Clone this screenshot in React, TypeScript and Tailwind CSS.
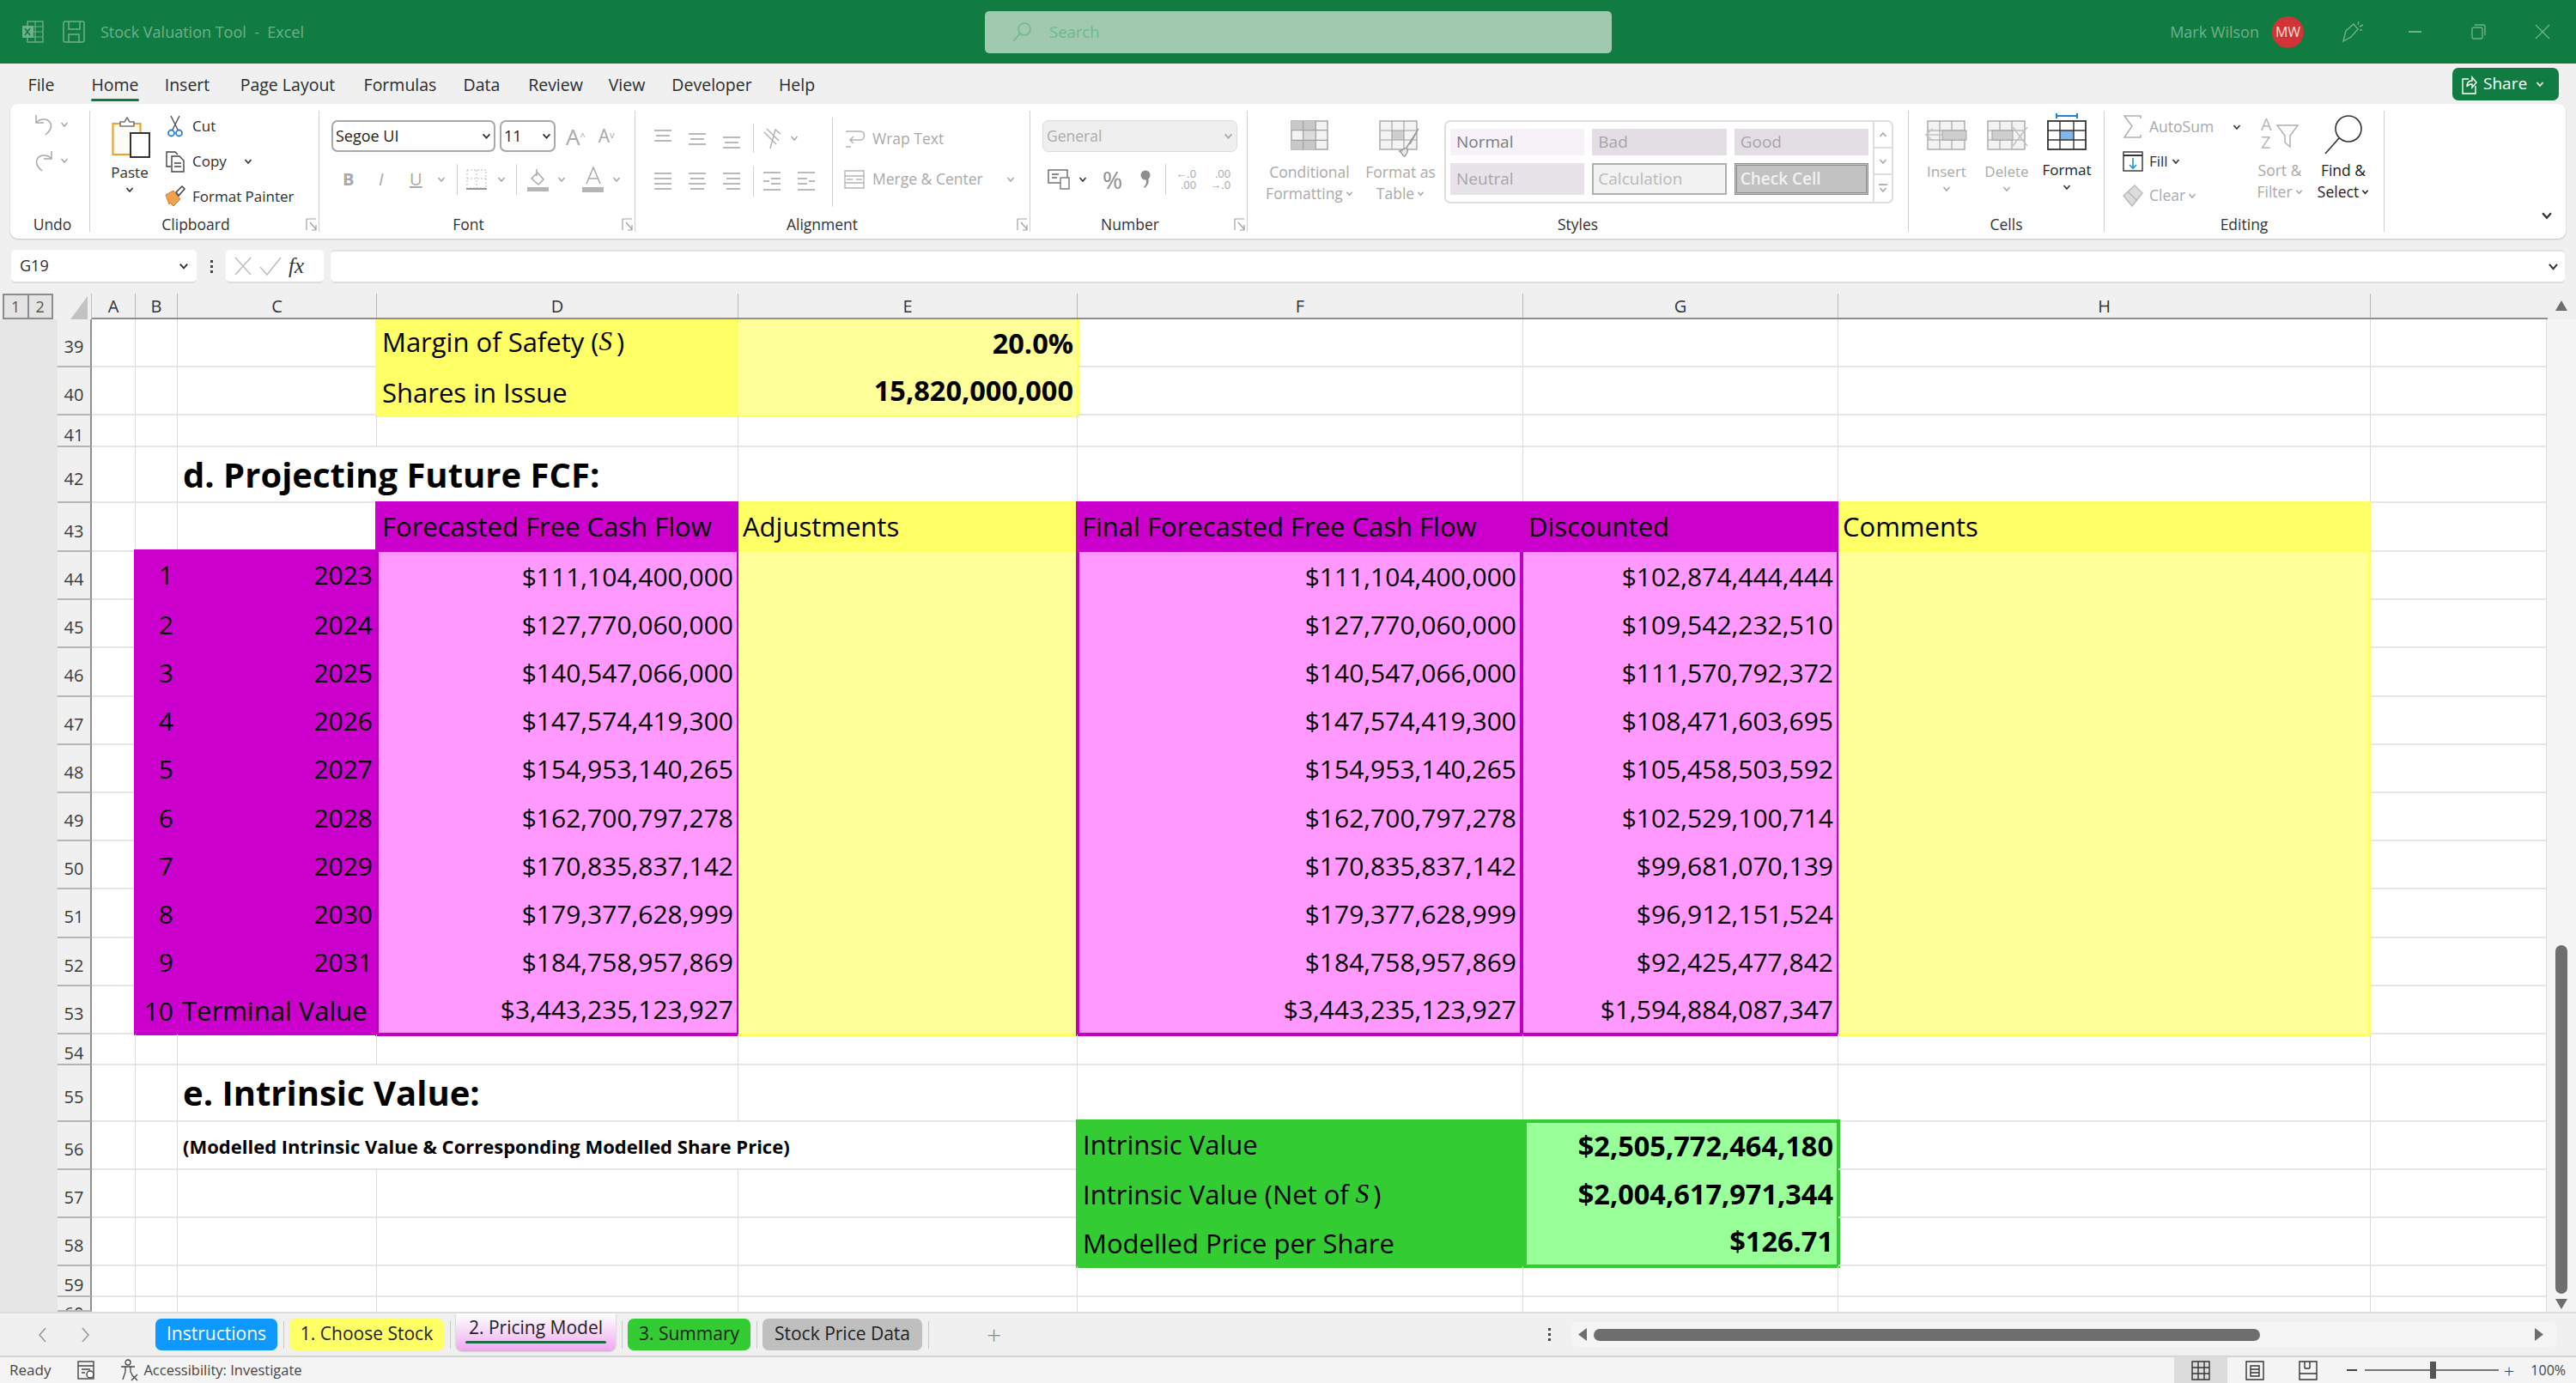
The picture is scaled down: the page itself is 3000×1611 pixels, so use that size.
import React from "react";

const G = "#a9a9a9";
const D = "#333333";

function Chev({ c = G, s = 10, className = "" }: { c?: string; s?: number; className?: string }) {
  return (
    <svg width={s} height={s} viewBox="0 0 10 10" className={className} fill="none">
      <path d="M1.5 3l3.5 4 3.5-4" stroke={c} strokeWidth="1.6" />
    </svg>
  );
}

function Launcher() {
  return (
    <svg width="13" height="16" viewBox="0 0 13 16" fill="none" className="absolute right-[2px] bottom-[0px]">
      <path d="M1 1h11M1 1v13M5 5l7 8M12 8v6H7" stroke="#a0a0a0" strokeWidth="1.2" />
    </svg>
  );
}

function Lines({ w = 22, rows, c = "#a9a9a9" }: { w?: number; rows: [number, number, number][]; c?: string }) {
  return (
    <svg width={w} height="26" viewBox={`0 0 ${w} 26`} fill="none" className="shrink-0">
      {rows.map((r, i) => (
        <path key={i} d={`M${r[0]} ${r[2]}H${r[1]}`} stroke={c} strokeWidth="1.6" />
      ))}
    </svg>
  );
}

function GridIcon({ stroke = "#a0a0a0", w = 44, h = 34, children }: { stroke?: string; w?: number; h?: number; children?: React.ReactNode }) {
  return (
    <svg width={w} height={h} viewBox={`0 0 ${w} ${h}`} fill="none">
      <rect x="1" y="1" width={w - 2} height={h - 2} fill="#f3f3f3" stroke={stroke} strokeWidth="1.4" />
      {children}
      <path
        d={`M${w / 3} 1V${h - 1}M${(2 * w) / 3} 1V${h - 1}M1 ${h / 3}H${w - 1}M1 ${(2 * h) / 3}H${w - 1}`}
        stroke={stroke}
        strokeWidth="1.2"
      />
    </svg>
  );
}

function Group({ w, label, launcher, children, lc = "" }: { w: string; label: string; launcher?: boolean; children: React.ReactNode; lc?: string }) {
  return (
    <div className={`relative flex flex-col shrink-0 h-[141px] border-r border-r-[#d0d0d0] ${w}`}>
      <div className="flex-1 min-h-0">{children}</div>
      <div className={`h-[18px] leading-[18px] text-center text-[17.5px] text-[#333333] ${lc}`}>{label}</div>
      {launcher && <Launcher />}
    </div>
  );
}

function BigLabel({ a, b, c = "#a9a9a9" }: { a: string; b?: string; c?: string }) {
  return (
    <div className="flex flex-col items-center text-[17.5px] leading-[25px] whitespace-nowrap" style={{ color: c }}>
      <span>{a}</span>
      {b && (
        <span className="flex items-center gap-[3px]">
          {b}
          <Chev c={c} s={9} />
        </span>
      )}
    </div>
  );
}

function Ribbon() {
  const tl = "text-[17px] text-[#2e2e2e] whitespace-nowrap";
  const dl = "text-[17.5px] text-[#a9a9a9] whitespace-nowrap";
  return (
    <div className="mx-[12px] h-[157px] bg-white rounded-[9px] shadow-[0_1px_2px_rgba(0,0,0,0.2)] flex pt-[8px]">
      <Group w="w-[93px]" label="Undo" lc="pl-[6px]">
        <div className="pl-[27px] pt-[3px] flex flex-col gap-[16px]">
          <div className="flex items-center gap-[7px]">
            <svg width="24" height="26" viewBox="0 0 24 26" fill="none">
              <path d="M3 2v9h9M3 11c4-5 14-6 17 1 2 5-1 9-6 13" stroke={G} strokeWidth="1.5" />
            </svg>
            <Chev />
          </div>
          <div className="flex items-center gap-[7px]">
            <svg width="24" height="26" viewBox="0 0 24 26" fill="none">
              <path d="M21 2v9h-9M21 11c-4-5-14-6-17 1-2 5 1 9 6 13" stroke={G} strokeWidth="1.5" />
            </svg>
            <Chev />
          </div>
        </div>
      </Group>
      <Group w="w-[267px]" label="Clipboard" launcher lc="pr-[20px]">
        <div className="flex pl-[24px] pt-[5px]">
          <div className="flex flex-col items-center w-[44px]">
            <svg width="46" height="50" viewBox="0 0 46 50" fill="none" className="ml-[4px]">
              <rect x="1.5" y="10" width="32" height="36" fill="#fffdf7" stroke="#e8a33d" strokeWidth="2.2" />
              <path d="M10 13V8h5l3-5 3 5h5v5z" fill="#fff" stroke="#777" strokeWidth="1.6" />
              <rect x="22" y="21" width="22" height="28" fill="#fff" stroke="#333" strokeWidth="2" />
            </svg>
            <div className="text-[17px] text-[#2e2e2e] mt-[6px] leading-[22px]">Paste</div>
            <Chev c={D} className="mt-[4px]" />
          </div>
          <div className="flex flex-col pl-[19px] gap-[15px]">
            <div className="flex items-center gap-[8px] h-[26px]">
              <svg width="24" height="26" viewBox="0 0 24 26" fill="none">
                <path d="M7 1l8 16M17 1L9 17" stroke="#555" strokeWidth="1.5" />
                <circle cx="7.5" cy="21" r="3.5" stroke="#2b7cd3" strokeWidth="1.8" />
                <circle cx="16.5" cy="21" r="3.5" stroke="#2b7cd3" strokeWidth="1.8" />
              </svg>
              <span className={tl}>Cut</span>
            </div>
            <div className="flex items-center gap-[8px] h-[26px]">
              <svg width="24" height="26" viewBox="0 0 24 26" fill="none">
                <path d="M7 19H2V2h10l3 3" stroke="#444" strokeWidth="1.4" />
                <path d="M8 7h9l5 5v13H8z M11 15h8M11 19h8" fill="#fff" stroke="#444" strokeWidth="1.4" />
              </svg>
              <span className={tl}>Copy</span>
              <Chev c={D} className="ml-[12px]" />
            </div>
            <div className="flex items-center gap-[8px] h-[26px]">
              <svg width="24" height="26" viewBox="0 0 24 26" fill="none">
                <path d="M1 11l9-5 8 10-8 8-4-4-1 2z" fill="#f0a24a" stroke="#d9772b" strokeWidth="1" />
                <path d="M13 8l7-7 3 3-7 8z" fill="#fff" stroke="#444" strokeWidth="1.5" />
              </svg>
              <span className={tl}>Format Painter</span>
            </div>
          </div>
        </div>
      </Group>
      <Group w="w-[368px]" label="Font" launcher lc="pr-[20px]">
        <div className="pl-[14px] pt-[11px]">
          <div className="flex items-center h-[37px]">
            <div className="w-[191px] h-[37px] border-2 border-[#a8a8a8] rounded-[7px] flex items-center justify-between px-[3px] text-[18px] text-[#222222]">
              <span>Segoe UI</span>
              <Chev c={D} s={11} />
            </div>
            <div className="ml-[5px] w-[65px] h-[37px] border-2 border-[#a8a8a8] rounded-[7px] flex items-center justify-between px-[3px] text-[18px] text-[#222222]">
              <span>11</span>
              <Chev c={D} s={11} />
            </div>
            <span className="ml-[12px] text-[26px] text-[#a9a9a9] leading-none">A<sup className="text-[11px]">^</sup></span>
            <span className="ml-[15px] text-[21px] text-[#a9a9a9] leading-none">A<sup className="text-[11px]">v</sup></span>
          </div>
          <div className="flex items-center h-[36px] mt-[14px] text-[#a9a9a9]">
            <span className="ml-[13px] w-[27px] font-bold text-[20px]">B</span>
            <span className="ml-[15px] w-[36px] italic text-[20px]">I</span>
            <span className="w-[32px] underline text-[20px]">U</span>
            <Chev />
            <span className="ml-[13px] h-[36px] border-r border-r-[#d0d0d0]" />
            <svg className="ml-[10px]" width="24" height="24" viewBox="0 0 24 24" fill="none">
              <rect x="1" y="1" width="22" height="21" stroke="#bbb" strokeDasharray="2 2" />
              <path d="M12 1v21M1 11h22" stroke="#bbb" strokeDasharray="2 2" />
              <path d="M0 23h24" stroke="#999" strokeWidth="2" />
            </svg>
            <Chev className="ml-[12px]" />
            <span className="ml-[12px] h-[36px] border-r border-r-[#d0d0d0]" />
            <svg className="ml-[12px]" width="26" height="28" viewBox="0 0 26 28" fill="none">
              <path d="M5 13l7-7 7 8-6 6z" stroke="#aaa" strokeWidth="1.5" />
              <path d="M11 2v8" stroke="#aaa" strokeWidth="1.5" />
              <rect x="0" y="23" width="25" height="5" fill="#b5b5b5" />
            </svg>
            <Chev className="ml-[9px]" />
            <svg className="ml-[19px]" width="26" height="30" viewBox="0 0 26 30" fill="none">
              <path d="M5 20l8-19 8 19M8 14h10" stroke="#aaa" strokeWidth="1.5" />
              <rect x="0" y="24" width="25" height="6" fill="#b5b5b5" />
            </svg>
            <Chev className="ml-[9px]" />
          </div>
        </div>
      </Group>
      <Group w="w-[460px]" label="Alignment" launcher lc="pr-[24px]">
        <div className="pt-[8px] flex">
          <div className="flex flex-col w-[229px] shrink-0">
            <div className="flex items-center h-[47px] pl-[21px] gap-[18px]">
              <Lines rows={[[1, 21, 4], [3, 19, 10], [1, 21, 16]]} />
              <Lines rows={[[1, 21, 8], [3, 19, 14], [1, 21, 20]]} />
              <Lines rows={[[1, 21, 12], [3, 19, 18], [1, 21, 24]]} />
              <span className="h-[34px] border-r border-r-[#d0d0d0] -ml-[4px] -mr-[9px]" />
              <svg width="26" height="26" viewBox="0 0 26 26" fill="none" className="shrink-0">
                <path d="M6 2l14 14M3 6l14 14M10 25l6-22 6 5" stroke="#b0b0b0" strokeWidth="1.4" />
              </svg>
              <Chev className="-ml-[11px]" />
            </div>
            <div className="flex items-center h-[47px] pl-[21px] gap-[18px] mt-[3px]">
              <Lines rows={[[1, 21, 4], [1, 21, 10], [1, 21, 16], [1, 21, 22]]} />
              <Lines rows={[[1, 21, 4], [3, 19, 10], [1, 21, 16], [3, 19, 22]]} />
              <Lines rows={[[1, 21, 4], [5, 21, 10], [1, 21, 16], [5, 21, 22]]} />
              <span className="h-[36px] border-r border-r-[#d0d0d0] -ml-[4px] -mr-[8px]" />
              <Lines rows={[[1, 21, 3], [10, 21, 10], [1, 8, 13], [10, 21, 16], [1, 21, 23]]} />
              <Lines rows={[[1, 21, 3], [1, 12, 10], [14, 21, 13], [1, 12, 16], [1, 21, 23]]} />
            </div>
          </div>
          <div className="flex flex-col border-l border-l-[#d0d0d0] h-[104px] pl-[12px] gap-[12px] pt-[7px]">
            <div className="flex items-center gap-[8px] h-[35px]">
              <svg width="26" height="26" viewBox="0 0 26 26" fill="none">
                <path d="M3 4h17c6 0 6 10 0 10H9M12 10l-4 4 4 4M3 22h6" stroke="#b5b5b5" strokeWidth="1.5" />
              </svg>
              <span className={dl}>Wrap Text</span>
            </div>
            <div className="flex items-center gap-[8px] h-[35px]">
              <svg width="26" height="26" viewBox="0 0 26 26" fill="none">
                <path d="M2 3h22v20H2zM2 9h22M2 17h22M4 13h7m11 0h-7" stroke="#b5b5b5" strokeWidth="1.4" />
              </svg>
              <span className={dl}>Merge &amp; Center</span>
              <Chev className="ml-[19px]" />
            </div>
          </div>
        </div>
      </Group>
      <Group w="w-[253px]" label="Number" launcher lc="pr-[20px]">
        <div className="pl-[14px] pt-[11px]">
          <div className="w-[227px] h-[37px] bg-[#efefef] border border-[#dcdcdc] rounded-[7px] flex items-center justify-between px-[4px] text-[17.5px] text-[#ababab]">
            <span>General</span>
            <Chev s={11} />
          </div>
          <div className="flex items-center h-[36px] mt-[14px]">
            <svg className="ml-[6px]" width="26" height="24" viewBox="0 0 26 24" fill="none">
              <rect x="1" y="1" width="22" height="15" stroke="#666" strokeWidth="1.4" />
              <rect x="15" y="10" width="10" height="13" fill="#fff" stroke="#777" strokeWidth="1.4" />
              <path d="M5 6h8M5 10h6" stroke="#666" strokeWidth="1.4" />
            </svg>
            <Chev c={D} className="ml-[10px]" />
            <span className="ml-[18px] text-[28px] text-[#8e8e8e] leading-none">%</span>
            <svg className="ml-[21px] w-[12px] h-[22px]" viewBox="0 0 12 22" fill="#8e8e8e">
              <circle cx="6" cy="6" r="5.5" />
              <path d="M8 8c3 4 2 9-3 13l-1-1c3-3 4-7 2-10z" />
            </svg>
            <span className="ml-[17px] h-[36px] border-r border-r-[#d0d0d0]" />
            <span className="ml-[9px] w-[26px] text-[13px] leading-[13px] text-[#a9a9a9] text-right">←.0<br />.00</span>
            <span className="ml-[14px] w-[26px] text-[13px] leading-[13px] text-[#a9a9a9] text-right">.00<br />→.0</span>
          </div>
        </div>
      </Group>
      <Group w="w-[770px]" label="Styles">
        <div className="flex pt-[11px]">
          <div className="w-[144px] flex flex-col items-center">
            <GridIcon w={44} h={35}>
              <rect x="1" y="1" width="28" height="11" fill="#c8c8c8" />
              <rect x="15" y="12" width="14" height="11" fill="#dcdcdc" />
              <rect x="1" y="23" width="28" height="11" fill="#c8c8c8" />
            </GridIcon>
            <div className="mt-[13px]">
              <BigLabel a="Conditional" b="Formatting" />
            </div>
          </div>
          <div className="w-[68px] flex flex-col items-center">
            <svg width="50" height="44" viewBox="0 0 50 44" fill="none" className="shrink-0">
              <rect x="1" y="1" width="43" height="33" fill="#f3f3f3" stroke="#a0a0a0" strokeWidth="1.3" />
              <rect x="15" y="12" width="14" height="11" fill="#cfcfcf" />
              <path d="M15 1v33M29 1v33M1 12h43M1 23h43" stroke="#a0a0a0" strokeWidth="1.1" />
              <path d="M24 36c4 2 2 6 6 6 4-4 4-8 2-10zM32 32l14-22-10 18" fill="#e8e8e8" stroke="#999" strokeWidth="1.4" />
            </svg>
            <div className="mt-[4px]">
              <BigLabel a="Format as" b="Table" />
            </div>
          </div>
          <div className="ml-[17px] w-[523px] h-[97px] border-2 border-[#dedede] rounded-[7px] flex overflow-hidden">
            <div className="flex-1 grid grid-cols-3 gap-x-[9px] gap-y-[9px] pl-[5px] pr-[5px] py-[8px] text-[19px]">
              <div className="bg-[#f6f2f7] text-[#7b7b7b] px-[7px] flex items-center">Normal</div>
              <div className="bg-[#e3dee4] text-[#a8a3a9] px-[7px] flex items-center">Bad</div>
              <div className="bg-[#e3dee4] text-[#a8a3a9] px-[7px] flex items-center">Good</div>
              <div className="bg-[#e8e3e9] text-[#a8a3a9] px-[7px] flex items-center">Neutral</div>
              <div className="bg-[#f2f2f2] border-2 border-[#b0b0b0] text-[#b9b9b9] px-[5px] flex items-center">Calculation</div>
              <div className="bg-[#c2c2c2] border-[3px] border-double border-[#8c8c8c] text-[#f2f2f2] font-semibold px-[4px] flex items-center">Check Cell</div>
            </div>
            <div className="w-[22px] flex flex-col border-l-2 border-l-[#dedede] text-[#b4b4b4]">
              <div className="h-[31px] flex items-center justify-center border-b-2 border-b-[#dedede]"><Chev s={10} className="rotate-180" /></div>
              <div className="h-[31px] flex items-center justify-center border-b-2 border-b-[#dedede]"><Chev s={10} /></div>
              <div className="flex-1 flex flex-col items-center justify-center"><div className="w-[10px] h-[2px] bg-[#b4b4b4]" /><Chev s={10} /></div>
            </div>
          </div>
        </div>
      </Group>
      <Group w="w-[228px]" label="Cells">
        <div className="flex pl-[9px] pt-[3px]">
          <div className="w-[70px] flex flex-col items-center">
            <div className="h-[8px]" />
            <svg width="50" height="35" viewBox="0 0 50 35" fill="none">
              <rect x="3" y="1" width="43" height="33" fill="#f3f3f3" stroke="#a0a0a0" strokeWidth="1.3" />
              <path d="M17 1v33M31 1v33M3 12h43M3 23h43" stroke="#a0a0a0" strokeWidth="1.1" />
              <rect x="20" y="12" width="28" height="11" fill="#cfcfcf" stroke="#a0a0a0" />
              <path d="M20 17H1m8-7l-8 7 8 7" stroke="#c2c2c2" strokeWidth="1.6" />
            </svg>
            <div className="text-[17px] text-[#a9a9a9] mt-[14px] leading-[22px]">Insert</div>
            <Chev className="mt-[4px]" />
          </div>
          <div className="w-[70px] flex flex-col items-center">
            <div className="h-[8px]" />
            <svg width="50" height="35" viewBox="0 0 50 35" fill="none">
              <rect x="3" y="1" width="43" height="33" fill="#f3f3f3" stroke="#a0a0a0" strokeWidth="1.3" />
              <path d="M17 1v33M31 1v33M3 12h43M3 23h43" stroke="#a0a0a0" strokeWidth="1.1" />
              <rect x="8" y="12" width="24" height="11" fill="#cfcfcf" stroke="#a0a0a0" />
              <path d="M32 8l17 22M49 8L32 30" stroke="#c2c2c2" strokeWidth="1.6" />
            </svg>
            <div className="text-[17px] text-[#a9a9a9] mt-[14px] leading-[22px]">Delete</div>
            <Chev className="mt-[4px]" />
          </div>
          <div className="w-[70px] flex flex-col items-center">
            <div className="w-[26px] h-[6px] border-x-2 border-x-[#2b7cd3] flex items-center mb-[2px]"><div className="w-full h-[2px] bg-[#2b7cd3]" /></div>
            <svg width="46" height="35" viewBox="0 0 46 35" fill="none">
              <rect x="1" y="1" width="44" height="33" fill="#fff" stroke="#333" strokeWidth="1.8" />
              <rect x="15" y="12" width="16" height="11" fill="#7db7ec" />
              <path d="M15 1v33M31 1v33M1 12h44M1 23h44" stroke="#333" strokeWidth="1.4" />
            </svg>
            <div className="text-[17px] text-[#222222] mt-[12px] leading-[22px]">Format</div>
            <Chev c={D} className="mt-[4px]" />
          </div>
        </div>
      </Group>
      <Group w="w-[326px]" label="Editing">
        <div className="flex pl-[21px] pt-[5px]">
          <div className="flex flex-col w-[146px] gap-[13px]">
            <div className="flex items-center h-[27px]">
              <svg width="24" height="28" viewBox="0 0 24 28" fill="none">
                <path d="M21 4V1H2l9 12L2 26h19v-3" stroke="#b0b0b0" strokeWidth="1.5" />
              </svg>
              <span className={`${dl} ml-[7px]`}>AutoSum</span>
              <Chev c={D} className="ml-[22px]" />
            </div>
            <div className="flex items-center h-[27px]">
              <svg width="24" height="24" viewBox="0 0 24 24" fill="none">
                <rect x="1" y="1" width="22" height="22" stroke="#333" strokeWidth="1.4" />
                <path d="M1 5h22" stroke="#333" strokeWidth="2" />
                <path d="M12 8v12m-4-4l4 4 4-4" stroke="#2b8fd3" strokeWidth="1.6" />
              </svg>
              <span className={`${tl} ml-[7px]`}>Fill</span>
              <Chev c={D} className="ml-[4px]" />
            </div>
            <div className="flex items-center h-[27px]">
              <svg width="24" height="26" viewBox="0 0 24 26" fill="none">
                <path d="M1 13L14 1l9 9-12 15z" fill="#dcdcdc" stroke="#b8b8b8" strokeWidth="1.4" />
                <path d="M6 8l11 11" stroke="#b8b8b8" strokeWidth="1.4" />
              </svg>
              <span className={`${dl} ml-[7px]`}>Clear</span>
              <Chev className="ml-[3px]" />
            </div>
          </div>
          <div className="w-[74px] flex flex-col items-center">
            <div className="h-[42px] flex shrink-0">
              <div className="flex flex-col text-[20px] leading-[21px] text-[#b8b8b8] w-[18px]">
                <span>A</span>
                <span>Z</span>
              </div>
              <svg width="26" height="42" viewBox="0 0 26 42" fill="none">
                <path d="M1 12h24l-9 12v13l-6-5V24z" fill="#fff" stroke="#b0b0b0" strokeWidth="1.5" />
              </svg>
            </div>
            <div className="mt-[10px]">
              <BigLabel a="Sort &" b="Filter" />
            </div>
          </div>
          <div className="w-[74px] flex flex-col items-center">
            <svg width="46" height="46" viewBox="0 0 46 46" fill="none">
              <circle cx="29" cy="16" r="15" stroke="#333" strokeWidth="1.6" />
              <path d="M18 27L2 45" stroke="#333" strokeWidth="1.6" />
            </svg>
            <div className="mt-[6px]">
              <BigLabel a="Find &" b="Select" c="#222222" />
            </div>
          </div>
        </div>
      </Group>
      <div className="relative flex-1">
        <Chev c={D} s={14} className="absolute right-[15px] bottom-[20px]" />
      </div>
    </div>
  );
}

function Tabs() {
  const items: [string, string][] = [
    ["File", "w-[64px]"],
    ["Home", "w-[108px]"],
    ["Insert", "w-[60px]"],
    ["Page Layout", "w-[174px]"],
    ["Formulas", "w-[88px]"],
    ["Data", "w-[102px]"],
    ["Review", "w-[70px]"],
    ["View", "w-[96px]"],
    ["Developer", "w-[102px]"],
    ["Help", "w-[96px]"],
  ];
  return (
    <div className="h-[47px] flex items-center pl-[16px] pr-[20px] justify-between">
      <div className="flex h-full pt-[2px]">
        {items.map(([t, w]) => (
          <div key={t} className={`${w} shrink-0 flex items-center justify-center relative text-[19.5px] text-[#2b2b2b] whitespace-nowrap`}>
            <span className="relative">
              {t}
              {t === "Home" && <span className="absolute left-0 right-0 -bottom-[5px] h-[3px] bg-[#107c41] rounded-sm" />}
            </span>
          </div>
        ))}
      </div>
      <div className="w-[124px] h-[38px] bg-[#107c41] rounded-[7px] flex items-center text-white text-[19px] pl-[11px]">
        <svg width="18" height="24" viewBox="0 0 18 24" fill="none">
          <path d="M8 6H1v17h15v-9M6 15c0-5 3-7 6-7V4l5 6-5 6v-4c-3 0-5 1-6 3z" stroke="#fff" strokeWidth="1.4" />
        </svg>
        <span className="ml-[7px]">Share</span>
        <Chev c="#fff" s={10} className="ml-[10px]" />
      </div>
    </div>
  );
}

function TitleBar() {
  const c = "#6fb08d";
  return (
    <div className="h-[74px] bg-[#107c41] flex items-center relative shrink-0">
      <div className="flex items-center w-[1147px] shrink-0 pl-[25px]">
        <svg width="26" height="26" viewBox="0 0 26 26" fill="none">
          <rect x="7" y="1" width="18" height="24" stroke={c} strokeWidth="1.4" />
          <path d="M16 1v24M7 7h18M7 13h18M7 19h18" stroke={c} strokeWidth="1.2" />
          <rect x="1" y="6" width="13" height="14" fill={c} />
          <path d="M4 9l6 8M10 9l-6 8" stroke="#107c41" strokeWidth="1.6" />
        </svg>
        <svg className="ml-[22px]" width="26" height="26" viewBox="0 0 26 26" fill="none">
          <rect x="1" y="1" width="24" height="24" rx="2" stroke={c} strokeWidth="1.5" />
          <path d="M7 1v9h13V1M7 25v-9h12v9" stroke={c} strokeWidth="1.5" />
        </svg>
        <span className="ml-[18px] text-[18px] whitespace-pre" style={{ color: c }}>Stock Valuation Tool  -  Excel</span>
      </div>
      <div className="w-[730px] h-[49px] bg-[#a0c9b0] rounded-[5px] flex items-center pl-[32px] shrink-0">
        <svg width="22" height="24" viewBox="0 0 22 24" fill="none">
          <circle cx="14" cy="9" r="7" stroke="#6db98a" strokeWidth="1.5" />
          <path d="M9 14L1 23" stroke="#6db98a" strokeWidth="1.5" />
        </svg>
        <span className="ml-[21px] text-[18.5px] text-[#6db98a]">Search</span>
      </div>
      <div className="flex-1 flex items-center justify-end pr-[30px]">
        <span className="text-[18px]" style={{ color: c }}>Mark Wilson</span>
        <div className="ml-[15px] w-[37px] h-[37px] rounded-full bg-[#d13438] flex items-center justify-center text-[16px] text-[#f4dcdc]">MW</div>
        <svg className="ml-[44px]" width="26" height="26" viewBox="0 0 26 26" fill="none">
          <path d="M2 24l3-12 9-8 5 6-8 9zM20 1l-1 4M25 5l-4 2M24 11h-3" stroke={c} strokeWidth="1.4" />
        </svg>
        <div className="ml-[52px] w-[15px] h-[2px]" style={{ background: c }} />
        <svg className="ml-[58px]" width="17" height="18" viewBox="0 0 17 18" fill="none">
          <rect x="1" y="4" width="12" height="13" rx="2" stroke={c} strokeWidth="1.4" />
          <path d="M4 1h10a2 2 0 012 2v10" stroke={c} strokeWidth="1.4" />
        </svg>
        <svg className="ml-[57px]" width="18" height="18" viewBox="0 0 18 18" fill="none">
          <path d="M1 1l16 16M17 1L1 17" stroke={c} strokeWidth="1.4" />
        </svg>
      </div>
    </div>
  );
}

function FormulaBar() {
  return (
    <div className="h-[39px] mt-[13px] mx-[13px] flex shrink-0">
      <div className="w-[216px] bg-white rounded-[5px] border-b-2 border-b-[#dcdcdc] flex items-center justify-between pl-[10px] pr-[9px] text-[18px] text-[#2e2e2e]">
        G19
        <Chev c={D} s={12} />
      </div>
      <div className="w-[34px] flex flex-col items-center justify-center gap-[3px]">
        <div className="w-[3px] h-[3px] bg-[#444444]" />
        <div className="w-[3px] h-[3px] bg-[#444444]" />
        <div className="w-[3px] h-[3px] bg-[#444444]" />
      </div>
      <div className="w-[114px] bg-white rounded-[5px] border-b-2 border-b-[#dcdcdc] flex items-center pl-[9px]">
        <svg width="22" height="22" viewBox="0 0 22 22" fill="none"><path d="M2 1l18 20M20 1L2 21" stroke="#bdbdbd" strokeWidth="1.5" /></svg>
        <svg className="ml-[8px]" width="26" height="22" viewBox="0 0 26 22" fill="none"><path d="M1 12l8 9L25 1" stroke="#bdbdbd" strokeWidth="1.5" /></svg>
        <span className="ml-[8px] italic text-[25px] text-[#333333] font-['Liberation_Serif',serif]">fx</span>
      </div>
      <div className="ml-[8px] flex-1 bg-white rounded-[5px] border-b-2 border-b-[#dcdcdc] border-t-2 border-t-[#e2e2e2] flex items-center justify-end pr-[7px]">
        <Chev c={D} s={13} />
      </div>
    </div>
  );
}

const proj: [number, string, string, string][] = [
  [1, "2023", "$111,104,400,000", "$102,874,444,444"],
  [2, "2024", "$127,770,060,000", "$109,542,232,510"],
  [3, "2025", "$140,547,066,000", "$111,570,792,372"],
  [4, "2026", "$147,574,419,300", "$108,471,603,695"],
  [5, "2027", "$154,953,140,265", "$105,458,503,592"],
  [6, "2028", "$162,700,797,278", "$102,529,100,714"],
  [7, "2029", "$170,835,837,142", "$99,681,070,139"],
  [8, "2030", "$179,377,628,999", "$96,912,151,524"],
  [9, "2031", "$184,758,957,869", "$92,425,477,842"],
  [10, "Terminal Value", "$3,443,235,123,927", "$1,594,884,087,347"],
];

const plain = "border-r border-r-[#dddddd] border-b-2 border-b-[#e6e6e6]";
const noR = "border-b-2 border-b-[#e6e6e6]";
const LBL = "text-[31px]";
const BLD = "text-[32.5px] font-bold";
const HED = "text-[40px] font-bold";

function Cell({ c = plain, t = "text-[30px]", children }: { c?: string; t?: string; children?: React.ReactNode }) {
  return <div className={`relative flex items-center whitespace-nowrap min-w-0 text-black ${t} ${c}`}>{children}</div>;
}

function RowHead({ n, clip }: { n: number; clip?: boolean }) {
  return (
    <div className={`bg-[#f0f0f0] border-r-2 border-r-[#8f8f8f] border-b-2 border-b-[#b5b5b5] flex justify-center overflow-hidden text-[20px] text-[#3a3a3a] ${clip ? "items-start pt-[9px] border-b-0" : "items-center pt-[10px]"}`}>
      <span className="leading-[20px]">{n}</span>
    </div>
  );
}

function Blank({ n }: { n: number }) {
  return (
    <>
      <RowHead n={n} clip={n === 60} />
      {Array.from({ length: 9 }).map((_, i) => (
        <Cell key={i} c={n === 60 ? "border-r border-r-[#dddddd]" : plain} />
      ))}
    </>
  );
}

function Sheet() {
  const ml = "bg-[#cc00cc]";
  const pink = "bg-[#ff99ff] border-[#c000c0]";
  return (
    <div className="grid grid-cols-[40px_51px_49px_232px_421px_395px_519px_367px_620px_205px] grid-rows-[56px_56px_37px_65px_57px_repeat(10,56.2px)_36px_66px_56px_56px_56px_36px_17px] bg-white overflow-hidden flex-1">
      {/* 39 */}
      <RowHead n={39} />
      <Cell /><Cell /><Cell />
      <Cell t={LBL} c="bg-[#ffff66] pl-[8px] -ml-[2px] pb-[3px]">Margin of Safety (<i className="font-['Liberation_Serif',serif] pr-[5px]">S</i>)</Cell>
      <Cell t={BLD} c="bg-[#ffff99] justify-end pr-[4px] border-r-[3px] border-r-[#ffff66] -mr-[2px]">20.0%</Cell>
      <Cell /><Cell /><Cell /><Cell />
      {/* 40 */}
      <RowHead n={40} />
      <Cell /><Cell /><Cell />
      <Cell t={LBL} c="bg-[#ffff66] pl-[8px] -ml-[2px] -mb-[2px]">Shares in Issue</Cell>
      <Cell t={BLD} c="bg-[#ffff99] justify-end pr-[4px] border-r-[3px] border-r-[#ffff66] border-b-[3px] border-b-[#ffff66] -mr-[2px] -mb-[2px]">15,820,000,000</Cell>
      <Cell /><Cell /><Cell /><Cell />
      {/* 41 */}
      <Blank n={41} />
      {/* 42 */}
      <RowHead n={42} />
      <Cell /><Cell />
      <Cell t={HED} c={`${noR} pl-[6px]`}>d. Projecting Future FCF:</Cell>
      <Cell /><Cell /><Cell /><Cell /><Cell /><Cell />
      {/* 43 */}
      <RowHead n={43} />
      <Cell /><Cell /><Cell />
      <Cell t={LBL} c={`${ml} pl-[8px] -ml-[2px] -mt-[2px] text-[#330033]`}>Forecasted Free Cash Flow</Cell>
      <Cell t={LBL} c="bg-[#ffff66] pl-[5px] -mt-[2px]">Adjustments</Cell>
      <Cell t={LBL} c={`${ml} pl-[7px] -ml-[2px] -mt-[2px] text-[#330033]`}>Final Forecasted Free Cash Flow</Cell>
      <Cell t={LBL} c={`${ml} pl-[6px] -mt-[2px] text-[#330033] -mr-[2px]`}>Discounted</Cell>
      <Cell t={LBL} c="bg-[#ffff66] pl-[5px] -mt-[2px]">Comments</Cell>
      <Cell />
      {/* 44-53 */}
      {proj.map((r, i) => {
        const last = i === 9;
        return (
          <React.Fragment key={r[0]}>
            <RowHead n={44 + i} />
            <Cell />
            <Cell c={`${ml} justify-end pr-[5px] -ml-[2px] ${i === 0 ? "-mt-[3px]" : ""} ${last ? "-mb-[1px]" : ""}`}>{r[0]}</Cell>
            <Cell t={last ? LBL : undefined} c={`${ml} ${last ? "justify-start pl-[5px] -mb-[1px]" : "justify-end pr-[5px]"} ${i === 0 ? "-mt-[3px]" : ""}`}>{r[1]}</Cell>
            <Cell c={`${pink} justify-end pr-[4px] border-x-[4px] -mx-[2px] ${last ? "border-b-[4px] -mb-[2px]" : ""}`}>{r[2]}</Cell>
            <Cell c={`bg-[#ffff99] ${last ? "border-b-[3px] border-b-[#ffff66] -mb-[2px]" : ""}`} />
            <Cell c={`${pink} justify-end pr-[4px] border-x-[4px] -ml-[2px] ${last ? "border-b-[4px] -mb-[2px]" : ""}`}>{r[2]}</Cell>
            <Cell c={`${pink} justify-end pr-[4px] border-r-[4px] -mr-[2px] ${last ? "border-b-[4px] -mb-[2px]" : ""}`}>{r[3]}</Cell>
            <Cell c={`bg-[#ffff99] border-r-[3px] border-r-[#ffff66] ${last ? "border-b-[3px] border-b-[#ffff66] -mb-[2px]" : ""}`} />
            <Cell />
          </React.Fragment>
        );
      })}
      {/* 54 */}
      <Blank n={54} />
      {/* 55 */}
      <RowHead n={55} />
      <Cell /><Cell />
      <Cell t={HED} c={`${noR} pl-[6px]`}>e. Intrinsic Value:</Cell>
      <Cell /><Cell /><Cell /><Cell /><Cell /><Cell />
      {/* 56 */}
      <RowHead n={56} />
      <Cell /><Cell />
      <Cell t="text-[22px] font-bold" c={`${noR} pl-[6px] pt-[3px]`}>(Modelled Intrinsic Value &amp; Corresponding Modelled Share Price)</Cell>
      <Cell c={noR} />
      <Cell />
      <Cell t={LBL} c="bg-[#33cc33] pl-[8px] -ml-[2px] -mt-[3px]">Intrinsic Value</Cell>
      <Cell t={BLD} c="bg-[#99ff99] border-[#33cc33] border-t-[4px] border-x-[4px] -mr-[2px] -mt-[3px] justify-end pr-[4px]">$2,505,772,464,180</Cell>
      <Cell /><Cell />
      {/* 57 */}
      <RowHead n={57} />
      <Cell /><Cell /><Cell /><Cell /><Cell />
      <Cell t={LBL} c="bg-[#33cc33] pl-[8px] -ml-[2px]">Intrinsic Value (Net of&nbsp;<i className="font-['Liberation_Serif',serif] pr-[5px]">S</i>)</Cell>
      <Cell t={BLD} c="bg-[#99ff99] border-[#33cc33] border-x-[4px] -mr-[2px] justify-end pr-[4px]">$2,004,617,971,344</Cell>
      <Cell /><Cell />
      {/* 58 */}
      <RowHead n={58} />
      <Cell /><Cell /><Cell /><Cell /><Cell />
      <Cell t={LBL} c="bg-[#33cc33] pl-[8px] -ml-[2px] -mb-[2px]">Modelled Price per Share</Cell>
      <Cell t={BLD} c="bg-[#99ff99] border-[#33cc33] border-x-[4px] border-b-[4px] -mr-[2px] -mb-[2px] justify-end pr-[4px]">$126.71</Cell>
      <Cell /><Cell />
      <Blank n={59} />
      <Blank n={60} />
    </div>
  );
}

function ColHeaders() {
  const cols: [string, string][] = [
    ["A", "w-[51px]"],
    ["B", "w-[49px]"],
    ["C", "w-[232px]"],
    ["D", "w-[421px]"],
    ["E", "w-[395px]"],
    ["F", "w-[519px]"],
    ["G", "w-[367px]"],
    ["H", "w-[620px]"],
  ];
  return (
    <div className="h-[42px] flex items-end shrink-0 pl-[3px]">
      <div className="flex w-[59px] h-[30px] border-2 border-[#8c8c8c] bg-[#e4e4e4] text-[18px] text-[#555555] shrink-0">
        <div className="flex-1 flex items-center justify-center border-r-2 border-r-[#8c8c8c]">1</div>
        <div className="flex-1 flex items-center justify-center">2</div>
      </div>
      <div className="w-[45px] h-[30px] flex justify-center items-end shrink-0 border-r border-r-[#bdbdbd] pl-[16px]">
        <svg width="20" height="27" viewBox="0 0 20 27"><path d="M20 0v27H0z" fill="#c2c2c2" /></svg>
      </div>
      <div className="flex h-[30px] flex-1 border-b-2 border-b-[#8f8f8f]">
        {cols.map(([n, w]) => (
          <div key={n} className={`${w} shrink-0 flex items-center justify-center pt-[2px] text-[20px] text-[#333333] border-r border-r-[#b8b8b8]`}>{n}</div>
        ))}
      </div>
      <div className="w-[33px] shrink-0 h-[30px]" />
    </div>
  );
}

function VScroll() {
  return (
    <div className="w-[34px] shrink-0 bg-[#f4f4f4] flex flex-col items-center relative">
      <svg className="-mt-[22px] shrink-0" width="14" height="12" viewBox="0 0 14 12"><path d="M7 0l7 12H0z" fill="#6e6e6e" /></svg>
      <div className="flex-1 w-full" />
      <div className="w-[14px] h-[406px] bg-[#6e6e6e] rounded-full" />
      <svg className="mt-[6px] mb-[3px] shrink-0" width="14" height="12" viewBox="0 0 14 12"><path d="M7 12L14 0H0z" fill="#6e6e6e" /></svg>
    </div>
  );
}

function SheetTabs() {
  const sep = <div className="w-[1px] h-[32px] bg-[#c8c8c8] mx-[6.5px] shrink-0" />;
  const t = "h-[37px] rounded-[7px] flex items-center justify-center pb-[2px] text-[21px] whitespace-nowrap shrink-0";
  return (
    <div className="h-[51px] bg-[#f0f0f0] flex items-center border-t-2 border-t-[#dcdcdc] shrink-0">
      <svg className="ml-[43px]" width="12" height="20" viewBox="0 0 12 20" fill="none"><path d="M10 2L3 10l7 8" stroke="#9a9a9a" strokeWidth="1.6" /></svg>
      <svg className="ml-[39px]" width="12" height="20" viewBox="0 0 12 20" fill="none"><path d="M2 2l7 8-7 8" stroke="#9a9a9a" strokeWidth="1.6" /></svg>
      <div className={`${t} ml-[75px] w-[142px] bg-[#0d99ff] text-white`}>Instructions</div>
      {sep}
      <div className={`${t} w-[180px] bg-[#ffff66] text-[#222222]`}>1. Choose Stock</div>
      {sep}
      <div className="w-[186px] h-[43px] mb-[7px] rounded-b-[7px] bg-[linear-gradient(#ffffff,#f8e0f8_40%,#f0a8f0)] flex flex-col items-center shrink-0 text-[21px] text-[#222222] leading-[32px] whitespace-nowrap shadow-[0_1px_2px_rgba(0,0,0,0.3)]">
        <span>2. Pricing Model</span>
        <div className="w-[164px] h-[3px] bg-[#1f6b47] rounded-sm" />
      </div>
      {sep}
      <div className={`${t} w-[143px] bg-[#33cc33] text-[#222222]`}>3. Summary</div>
      {sep}
      <div className={`${t} w-[186px] bg-[#bfbfbf] text-[#222222]`}>Stock Price Data</div>
      {sep}
      <div className="ml-[61px] text-[30px] font-light text-[#8a8a8a] leading-none">+</div>
      <div className="ml-[637px] flex flex-col gap-[3px] items-center">
        <div className="w-[3px] h-[3px] bg-[#444444]" />
        <div className="w-[3px] h-[3px] bg-[#444444]" />
        <div className="w-[3px] h-[3px] bg-[#444444]" />
      </div>
      <div className="ml-[24px] w-[1147px] h-[29px] bg-[#f5f5f5] rounded-[6px] flex items-center pl-[8px]">
        <svg width="10" height="15" viewBox="0 0 10 15"><path d="M0 7.5L10 0v15z" fill="#6e6e6e" /></svg>
        <div className="ml-[8px] w-[776px] h-[14px] bg-[#6e6e6e] rounded-full" />
        <svg className="ml-[320px]" width="10" height="15" viewBox="0 0 10 15"><path d="M10 7.5L0 0v15z" fill="#6e6e6e" /></svg>
      </div>
    </div>
  );
}

function StatusBar() {
  return (
    <div className="h-[32px] bg-[#f4f4f4] border-t-2 border-t-[#d4d4d4] flex items-center text-[#444444] shrink-0">
      <span className="ml-[11px] text-[17px]">Ready</span>
      <svg className="ml-[30px]" width="24" height="24" viewBox="0 0 24 24" fill="none">
        <rect x="2" y="2" width="18" height="20" stroke="#444" strokeWidth="1.4" />
        <path d="M2 7h18M6 11h10M6 15h4" stroke="#444" strokeWidth="1.4" />
        <circle cx="16" cy="17" r="4" fill="#fff" stroke="#444" strokeWidth="1.4" />
      </svg>
      <svg className="ml-[26px]" width="24" height="26" viewBox="0 0 24 26" fill="none">
        <circle cx="10" cy="4" r="3" stroke="#444" strokeWidth="1.3" />
        <path d="M2 9h16M7 9v6l-3 9M13 9v6l2 3M14 18l7 7M21 18l-7 7" stroke="#444" strokeWidth="1.3" />
      </svg>
      <span className="ml-[4px] text-[16.5px]">Accessibility: Investigate</span>
      <div className="flex-1" />
      <div className="w-[62px] h-[32px] bg-[#dcdcdc] flex items-center justify-center">
        <svg width="22" height="24" viewBox="0 0 22 24" fill="none">
          <path d="M1 2h20v21H1zM1 9h20M1 16h20M8 2v21M15 2v21" stroke="#333" strokeWidth="1.4" />
        </svg>
      </div>
      <svg className="ml-[21px]" width="22" height="24" viewBox="0 0 22 24" fill="none">
        <path d="M1 2h20v21H1zM6 7h10v12H6zM6 11h10M6 15h10" stroke="#333" strokeWidth="1.4" />
      </svg>
      <svg className="ml-[40px]" width="22" height="24" viewBox="0 0 22 24" fill="none">
        <path d="M1 2h20v21H1zM1 16h20M7 2v8M13 2v8M7 10h6" stroke="#333" strokeWidth="1.4" />
      </svg>
      <div className="ml-[34px] w-[12px] h-[2px] bg-[#444444]" />
      <div className="ml-[9px] w-[156px] h-[2px] bg-[#777777] relative flex items-center">
        <div className="absolute left-[76px] w-[7px] h-[20px] bg-[#555555]" />
      </div>
      <span className="ml-[6px] text-[22px] leading-none text-[#444444] font-light">+</span>
      <span className="ml-[19px] mr-[12px] text-[16px]">100%</span>
    </div>
  );
}

export default function App() {
  return (
    <div className="w-[3000px] h-[1611px] overflow-hidden bg-[#f0f0f0] flex flex-col font-['Open_Sans',sans-serif]">
      <TitleBar />
      <Tabs />
      <Ribbon />
      <FormulaBar />
      <ColHeaders />
      <div className="flex-1 min-h-0 flex">
        <div className="w-[67px] shrink-0 bg-[#e6e6e6]" />
        <Sheet />
        <VScroll />
      </div>
      <SheetTabs />
      <StatusBar />
    </div>
  );
}
